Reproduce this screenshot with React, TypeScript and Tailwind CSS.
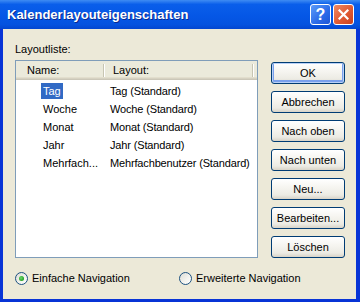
const rows = [
  { name: "Tag", layout: "Tag (Standard)", selected: true },
  { name: "Woche", layout: "Woche (Standard)" },
  { name: "Monat", layout: "Monat (Standard)" },
  { name: "Jahr", layout: "Jahr (Standard)" },
  { name: "Mehrfach...", layout: "Mehrfachbenutzer (Standard)" },
];

const buttons = ["Abbrechen", "Nach oben", "Nach unten", "Neu...", "Bearbeiten...", "Löschen"];

export default function App() {
  return (
    <div className="flex h-[302px] w-[360px] flex-col overflow-hidden bg-[#0834d6] font-['Liberation_Sans',Arial,sans-serif] text-[11px] text-black">
      <div className="flex h-[29px] shrink-0 items-center bg-[linear-gradient(to_bottom,#3f8cf3_0%,#0a5eea_15%,#0557e6_55%,#0452df_85%,#0346d0_100%)] pl-[7px] pr-[6px]">
        <span className="text-[13px] font-bold leading-none text-white [text-shadow:1px_1px_0_#0b2a8f]">Kalenderlayouteigenschaften</span>
        <div className="ml-auto flex gap-[2px]">
          <div className="flex h-[21px] w-[21px] items-center justify-center rounded-[3px] border border-white bg-[linear-gradient(135deg,#5d9cf8,#2a6ae8_60%,#1b55d6)] text-[16px] font-bold leading-none text-white">
            ?
          </div>
          <div className="flex h-[21px] w-[21px] items-center justify-center rounded-[3px] border border-white bg-[linear-gradient(135deg,#f08a64,#e05a33_55%,#c8401e)]">
            <svg width="11" height="11" viewBox="0 0 11 11">
              <path d="M1.5 1.5 L9.5 9.5 M9.5 1.5 L1.5 9.5" stroke="white" strokeWidth="2.2" strokeLinecap="square" />
            </svg>
          </div>
        </div>
      </div>

      <div className="mb-[3px] ml-[3px] mr-[4px] flex-1 bg-[#ece9d8] pl-[12px] pt-[14px]">
        <div className="leading-[13px]">Layoutliste:</div>
        <div className="mt-[4px] flex">
          <div className="h-[198px] w-[243px] border border-[#7f9db9] bg-white">
            <div className="relative flex h-[19px] items-center bg-[#ebeadb] shadow-[inset_0_-1px_0_#cbc7b8,inset_0_-2px_0_#d6d2c2,inset_0_-3px_0_#e2decd]">
              <span className="absolute left-[11px] top-[3px] leading-[13px]">Name:</span>
              <span className="absolute left-[87px] top-[3px] h-[13px] w-[2px] border-l border-[#c7c5b2] bg-white" />
              <span className="absolute left-[97px] top-[3px] leading-[13px]">Layout:</span>
              <span className="absolute left-[236px] top-[3px] h-[13px] w-[2px] border-l border-[#c7c5b2] bg-white" />
            </div>
            <div className="pt-[2px]">
              {rows.map((r) => (
                <div key={r.name} className="flex h-[18px] items-center">
                  <div className="w-[94px] pl-[25px]">
                    <span className={r.selected ? "block h-[16px] w-fit bg-[#316ac5] px-[2px] leading-[16px] text-white" : "block px-[2px] leading-[16px]"}>
                      {r.name}
                    </span>
                  </div>
                  <span className="tracking-[-0.15px] leading-[16px]">{r.layout}</span>
                </div>
              ))}
            </div>
          </div>

          <div className="ml-[13px] mt-[2px] flex flex-col gap-[7px]">
            <XpButton label="OK" primary />
            {buttons.map((b) => (
              <XpButton key={b} label={b} />
            ))}
          </div>
        </div>

        <div className="mt-[14px] flex items-center">
          <div className="w-[164px]">
            <Radio label="Einfache Navigation" checked />
          </div>
          <Radio label="Erweiterte Navigation" />
        </div>
      </div>
    </div>
  );
}

function XpButton({ label, primary }: { label: string; primary?: boolean }) {
  return (
    <div
      className={
        "flex h-[22px] w-[74px] items-center justify-center rounded-[3px] border border-[#003c74] bg-[linear-gradient(to_bottom,#ffffff,#f5f4ef_45%,#ecebe4_80%,#d8d3c7)] leading-none " +
        (primary ? "shadow-[inset_0_0_0_1px_#b9d1f7,inset_0_-1px_0_2px_#7aa0ec]" : "")
      }
    >
      {label}
    </div>
  );
}

function Radio({ label, checked }: { label: string; checked?: boolean }) {
  return (
    <div className="flex items-center">
      <span className="flex h-[13px] w-[13px] items-center justify-center rounded-full border border-[#1c5180] bg-[linear-gradient(135deg,#dcdcd5,#f4f4f0_60%,#ffffff)]">
        {checked ? <span className="h-[5px] w-[5px] rounded-full bg-[radial-gradient(circle_at_40%_40%,#6fd86f,#21a121_70%,#178617)]" /> : null}
      </span>
      <span className="ml-[4px] leading-[13px]">{label}</span>
    </div>
  );
}
